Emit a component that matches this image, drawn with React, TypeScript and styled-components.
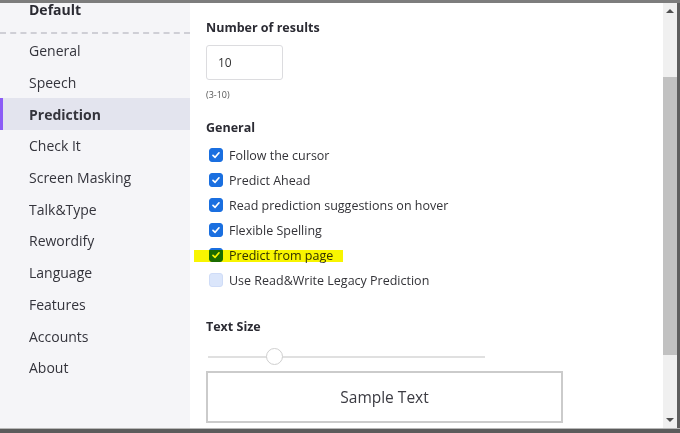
import React from "react";
import styled, { createGlobalStyle } from "styled-components";

const Global = createGlobalStyle`
  html, body { margin: 0; padding: 0; background: #ffffff; }
  body { font-family: "Open Sans", "Noto Sans", Arial, sans-serif; }
  #root { width: 680px; height: 433px; overflow: hidden; }
  * { box-sizing: border-box; }
`;

const Frame = styled.div`
  width: 680px;
  height: 433px;
  display: flex;
  flex-direction: column;
  overflow: hidden;
`;

const TopStrip = styled.div`
  height: 3px;
  flex: none;
  background: #7d7d7d;
`;

const BottomStrip = styled.div`
  height: 5px;
  flex: none;
  background: #5c5c5c;
  border-top: 1px solid #b8b8b8;
`;

const Main = styled.div`
  flex: 1;
  display: flex;
  min-height: 0;
`;

const Sidebar = styled.nav`
  width: 190px;
  flex: none;
  background: #f5f5f8;
  display: flex;
  flex-direction: column;
`;

const SideHeader = styled.div`
  height: 31px;
  padding-left: 29px;
  font-size: 14px;
  line-height: 14px;
  font-weight: 700;
  color: #2b2b33;
  border-bottom: 2px dashed #cfcfd6;
`;

const SideList = styled.ul`
  list-style: none;
  margin: 1px 0 0;
  padding: 0;
`;

const SideItem = styled.li<{ $active?: boolean }>`
  height: 31.7px;
  display: flex;
  align-items: center;
  padding-left: 29px;
  font-size: 14px;
  color: #34343c;
  font-weight: ${(p) => (p.$active ? 700 : 400)};
  background: ${(p) => (p.$active ? "#e3e4ee" : "transparent")};
  box-shadow: ${(p) => (p.$active ? "inset 3px 0 0 #8b5cf6" : "none")};
`;

const Content = styled.section`
  flex: 1;
  background: #ffffff;
  padding: 16px 0 0 16px;
  display: flex;
  flex-direction: column;
  align-items: flex-start;
  position: relative;
`;

const SectionTitle = styled.h3<{ $gap: number }>`
  margin: ${(p) => p.$gap}px 0 0;
  font-size: 12.5px;
  line-height: 18px;
  font-weight: 700;
  color: #2b2b33;
`;

const NumberBox = styled.div`
  margin-top: 8px;
  width: 77px;
  height: 35px;
  border: 1px solid #dcdcdf;
  border-radius: 3px;
  display: flex;
  align-items: center;
  padding-left: 11px;
  font-size: 12px;
  color: #333;
`;

const Hint = styled.div`
  margin-top: 9px;
  font-size: 9px;
  line-height: 12px;
  color: #555;
`;

const CheckList = styled.div`
  margin-top: 5.5px;
  display: flex;
  flex-direction: column;
`;

const CheckRow = styled.label`
  height: 25px;
  display: flex;
  align-items: center;
  gap: 6px;
  padding-left: 3px;
  font-size: 12.5px;
  color: #333338;
  position: relative;
`;

const Box = styled.span<{ $checked: boolean }>`
  width: 14px;
  height: 14px;
  border-radius: 3px;
  flex: none;
  display: flex;
  align-items: center;
  justify-content: center;
  background: ${(p) => (p.$checked ? "#1a6fe0" : "#dbe6fb")};
  border: 1px solid ${(p) => (p.$checked ? "#1a6fe0" : "#cfdcf7")};
`;

const Highlight = styled.span`
  position: absolute;
  left: -12px;
  top: 7px;
  width: 149px;
  height: 12px;
  background: #f8f500;
  mix-blend-mode: multiply;
  pointer-events: none;
`;

const Slider = styled.div`
  margin-top: 11px;
  margin-left: 2px;
  width: 277px;
  height: 20px;
  position: relative;
  display: flex;
  align-items: center;
`;

const Track = styled.div`
  width: 100%;
  height: 2px;
  background: #e0e0e0;
`;

const Thumb = styled.div`
  position: absolute;
  top: 1.5px;
  width: 17px;
  height: 17px;
  border-radius: 50%;
  background: #fff;
  border: 1px solid #cfcfcf;
`;

const SampleBox = styled.div`
  margin-top: 4px;
  width: 357px;
  height: 52px;
  border: 2px solid #cbcbcb;
  display: flex;
  align-items: center;
  justify-content: center;
  font-size: 15.5px;
  color: #3b3b42;
`;

const Scrollbar = styled.div`
  width: 14px;
  flex: none;
  background: #f0f0f0;
  display: flex;
  flex-direction: column;
  align-items: center;
`;

const Arrow = styled.div<{ $down?: boolean }>`
  height: 16px;
  display: flex;
  align-items: center;
  justify-content: center;
  flex: none;
  &::after {
    content: "";
    border-left: 4px solid transparent;
    border-right: 4px solid transparent;
    ${(p) => (p.$down ? "border-top: 4px solid #505050;" : "border-bottom: 4px solid #505050;")}
  }
`;

const ScrollTrack = styled.div`
  flex: 1;
  width: 100%;
  padding-top: 58px;
  padding-bottom: 57px;
  display: flex;
`;

const ScrollThumb = styled.div`
  flex: 1;
  background: #c1c1c1;
`;

const RightEdge = styled.div`
  width: 3px;
  flex: none;
  background: #5e5e5e;
`;

const Check = () => (
  <svg width="10" height="10" viewBox="0 0 10 10">
    <path d="M2 5.3 L4.1 7.3 L8 2.8" fill="none" stroke="#fff" strokeWidth="1.7" strokeLinecap="round" strokeLinejoin="round" />
  </svg>
);

const navItems = [
  "General",
  "Speech",
  "Prediction",
  "Check It",
  "Screen Masking",
  "Talk&Type",
  "Rewordify",
  "Language",
  "Features",
  "Accounts",
  "About",
];

const options = [
  { label: "Follow the cursor", checked: true },
  { label: "Predict Ahead", checked: true },
  { label: "Read prediction suggestions on hover", checked: true },
  { label: "Flexible Spelling", checked: true },
  { label: "Predict from page", checked: true, highlight: true },
  { label: "Use Read&Write Legacy Prediction", checked: false },
];

export default function App() {
  return (
    <Frame>
      <Global />
      <TopStrip />
      <Main>
        <Sidebar>
          <SideHeader>Default</SideHeader>
          <SideList>
            {navItems.map((n) => (
              <SideItem key={n} $active={n === "Prediction"}>
                {n}
              </SideItem>
            ))}
          </SideList>
        </Sidebar>
        <Content>
          <SectionTitle $gap={0}>Number of results</SectionTitle>
          <NumberBox>10</NumberBox>
          <Hint>(3-10)</Hint>
          <SectionTitle $gap={18}>General</SectionTitle>
          <CheckList>
            {options.map((o) => (
              <CheckRow key={o.label}>
                <Box $checked={o.checked}>{o.checked && <Check />}</Box>
                {o.label}
                {o.highlight && <Highlight />}
              </CheckRow>
            ))}
          </CheckList>
          <SectionTitle $gap={25}>Text Size</SectionTitle>
          <Slider>
            <Track />
            <Thumb style={{ left: 58 }} />
          </Slider>
          <SampleBox>Sample Text</SampleBox>
        </Content>
        <Scrollbar>
          <Arrow />
          <ScrollTrack>
            <ScrollThumb />
          </ScrollTrack>
          <Arrow $down />
        </Scrollbar>
        <RightEdge />
      </Main>
      <BottomStrip />
    </Frame>
  );
}
